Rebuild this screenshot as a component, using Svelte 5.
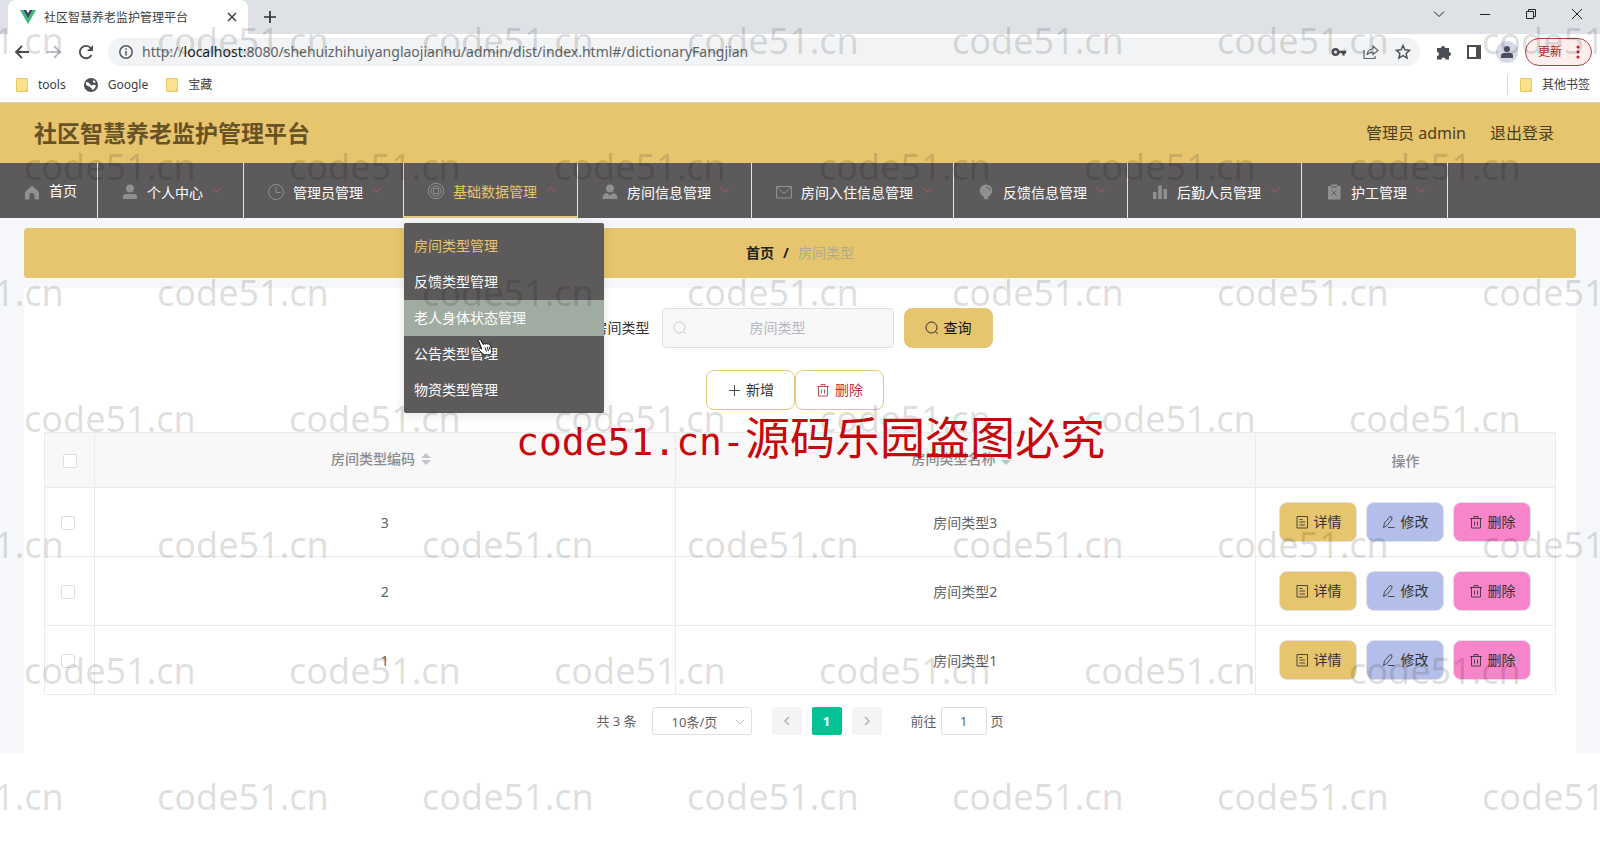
<!-- App.svelte -->
<script lang="ts">
	type NavItem = { label: string; icon: string; open?: boolean; children?: string[] };

	const navItems: NavItem[] = [
		{ label: '个人中心', icon: 'user' },
		{ label: '管理员管理', icon: 'clock' },
		{
			label: '基础数据管理',
			icon: 'ring',
			open: true,
			children: ['房间类型管理', '反馈类型管理', '老人身体状态管理', '公告类型管理', '物资类型管理']
		},
		{ label: '房间信息管理', icon: 'person' },
		{ label: '房间入住信息管理', icon: 'mail' },
		{ label: '反馈信息管理', icon: 'balloon' },
		{ label: '后勤人员管理', icon: 'bars' },
		{ label: '护工管理', icon: 'clipboard' }
	];

	const rows = [
		{ code: 3, name: '房间类型3' },
		{ code: 2, name: '房间类型2' },
		{ code: 1, name: '房间类型1' }
	];

	const watermarkRows = [0, 1, 2, 3, 4, 5, 6];
	const watermarkCols = [0, 1, 2, 3, 4, 5, 6];

	let keyword = $state('');
	let pageSize = $state('10');
	let jumpTo = $state('1');
	let checked = $state([false, false, false]);
	let allChecked = $derived(checked.every((c) => c));

	function toggleAll() {
		const next = !allChecked;
		checked = checked.map(() => next);
	}
</script>

{#snippet navIcon(name: string)}
	<svg class="nav-icon" viewBox="0 0 18 18" width="18" height="18" fill="#918f8f" stroke="none">
		{#if name === 'home'}
			<path d="M9 2.500 2 9v7.500h4.500v-4a2.500 2.500 0 0 1 5 0v4H16V9z" />
		{:else if name === 'user'}
			<circle cx="9" cy="5.500" r="4" />
			<path d="M2 16v-2.500Q2 11 5 11h8q3 0 3 2.500V16z" />
		{:else if name === 'clock'}
			<g fill="none" stroke="#918f8f"><circle cx="9" cy="9" r="7.500" /><path d="M9 4v5.500h4.500" /></g>
		{:else if name === 'ring'}
			<g fill="none" stroke="#918f8f">
				<circle cx="9" cy="9" r="7.700" />
				<circle cx="9" cy="9" r="5" />
				<path d="M6.500 6.500h5v5h-5z" />
			</g>
		{:else if name === 'person'}
			<circle cx="9" cy="5.500" r="4" />
			<path d="M1.500 16q0-5.500 4.500-6l3 2.500L12 10q4.500.5 4.500 6z" />
		{:else if name === 'mail'}
			<g fill="none" stroke="#918f8f"><path d="M1.500 3.500h15v11.500h-15zM2 4q5 6 7 6t7-6" /></g>
		{:else if name === 'balloon'}
			<path d="M9 1.500a6.300 6.300 0 0 1 6.300 6.300c0 3-2.300 5-4.700 6.600l1 1.800H6.400l1-1.800C5 12.800 2.700 10.800 2.700 7.800A6.300 6.300 0 0 1 9 1.500z" />
			<path d="M9.500 4q3.200.4 3.300 3.500" fill="none" stroke="#5c5a5a" />
		{:else if name === 'bars'}
			<path d="M2 9h3.500v7H2zM7.200 2.500h3.600V16H7.200zM12.500 6H16v10h-3.500z" />
		{:else if name === 'clipboard'}
			<path d="M3 3h3V1.500h6V3h3.500v13.500H3z" />
			<path d="M6 4h6M6.500 7.500l5 5M11.500 7.500l-5 5" fill="none" stroke="#5c5a5a" />
		{/if}
	</svg>
{/snippet}

{#snippet btnIcon(name: string)}
	<svg viewBox="0 0 14 14" width="14" height="14" fill="none" stroke="currentColor" stroke-opacity="0.85">
		{#if name === 'search'}
			<circle cx="6.500" cy="6.500" r="5.500" /><path d="m10.500 10.500 2.300 2.500" />
		{:else if name === 'plus'}
			<path d="M7.500 2v11M2 7.500h11" />
		{:else if name === 'trash'}
			<path d="M1 3.500h12M5 3.500v-2h4v2M2.500 3.500V13h9V3.500M5.500 6.500v4M8.500 6.500v4" />
		{:else if name === 'doc'}
			<path d="M2 1.500h10.500v11.500H2zM4.500 4.500h3M4.500 7h5.500M4.500 10h5.500" />
		{:else if name === 'edit'}
			<path d="M8 1.500q2.500 0 2 2.500L5 10.500 1.500 12.500 2.500 8zM6 12.500h6.500" />
		{/if}
	</svg>
{/snippet}

{#snippet folder()}
	<svg viewBox="0 0 12 14" width="12" height="14">
		<path d="M.5.5h11v13H.5z" fill="#fbe28a" stroke="#e4c766" />
		<path d="m9 13.500 2.500-4v4z" fill="#e4c766" />
	</svg>
{/snippet}

<div class="page">
	<div class="browser">
		<div class="tab-strip">
			<div class="tab">
				<svg viewBox="0 0 16 14" width="16" height="14">
					<path d="M0 0h3.200L8 8.500 12.800 0H16L8 14z" fill="#41b883" />
					<path d="M3.200 0h3L8 3.200 9.800 0h3L8 8.500z" fill="#35495e" />
				</svg>
				<span class="tab-title">社区智慧养老监护管理平台</span>
				<button class="bare" aria-label="关闭标签页">
					<svg viewBox="0 0 10 10" width="10" height="10" stroke="#3c4043" stroke-width="1.500"><path d="m1 1 8 8M9 1 1 9" /></svg>
				</button>
			</div>
			<button class="bare new-tab" aria-label="新标签页">
				<svg viewBox="0 0 12 12" width="12" height="12" stroke="#2f3235" stroke-width="1.700"><path d="M6 0v12M0 6h12" /></svg>
			</button>
			<div class="window-buttons">
				<button class="bare" aria-label="标签搜索"><svg viewBox="0 0 12 12" width="12" height="12"><path d="m1 3.500 5 5 5-5" /></svg></button>
				<button class="bare" aria-label="最小化"><svg viewBox="0 0 12 12" width="12" height="12"><path d="M1 6.500h10" /></svg></button>
				<button class="bare" aria-label="还原"><svg viewBox="0 0 12 12" width="12" height="12"><path d="M1.500 3.500h7v7h-7zM3.500 3.500v-2h7v7h-2" /></svg></button>
				<button class="bare" aria-label="关闭"><svg viewBox="0 0 12 12" width="12" height="12"><path d="m1 1 10 10M11 1 1 11" /></svg></button>
			</div>
		</div>

		<div class="toolbar">
			<button class="bare" aria-label="后退">
				<svg viewBox="0 0 16 16" width="16" height="16" fill="none" stroke="#4b4e52" stroke-width="1.800"><path d="M15 8H2M8 2 2 8l6 6" /></svg>
			</button>
			<button class="bare" aria-label="前进">
				<svg viewBox="0 0 16 16" width="16" height="16" fill="none" stroke="#b9bbbe" stroke-width="1.800"><path d="M1 8h13M8 2l6 6-6 6" /></svg>
			</button>
			<button class="bare" aria-label="刷新">
				<svg viewBox="0 0 16 16" width="16" height="16" fill="none" stroke="#4b4e52" stroke-width="1.800"><path d="M13.500 11A6.200 6.200 0 1 1 12.800 4" /><path d="M15 1v6H9z" fill="#4b4e52" stroke="none" /></svg>
			</button>
			<div class="address">
				<svg viewBox="0 0 14 14" width="14" height="14" fill="none" stroke="#55585c" stroke-width="1.500"><circle cx="7" cy="7" r="6.200" /><path d="M7 6v4.500M7 3.300v1.500" /></svg>
				<span class="url">http://<b>localhost:</b>8080/shehuizhihuiyanglaojianhu/admin/dist/index.html#/dictionaryFangjian</span>
				<div class="address-icons">
					<svg viewBox="0 0 16 16" width="16" height="16" fill="none" stroke="#4b4e52" stroke-width="2.400"><circle cx="4.500" cy="8" r="2.700" /><path d="M7 8h8M12.500 8v3.500" /></svg>
					<svg viewBox="0 0 16 16" width="16" height="16" fill="none" stroke="#5f6368" stroke-width="1.200"><path d="M1 6v8.500h11V12M4 11q.5-6 6-6V2l5 4.500-5 4V8Q6 8 4 11z" /></svg>
					<svg viewBox="0 0 16 16" width="16" height="16" fill="none" stroke="#4b4e52" stroke-width="1.400"><path d="m8 1.500 1.900 4.300 4.700.5-3.500 3.100 1 4.600L8 11.600 3.900 14l1-4.600-3.500-3.100 4.700-.5z" /></svg>
				</div>
			</div>
			<div class="extensions">
				<svg viewBox="0 0 16 16" width="16" height="16" fill="#4b4e52"><path d="M1 4h4a2 2 0 1 1 4 0h4v4a2 2 0 1 1 0 4v3.500H9.500a2 2 0 0 0-4 0H1V12a2 2 0 0 0 0-4z" /></svg>
				<svg viewBox="0 0 16 16" width="16" height="16" fill="none" stroke="#4b4e52" stroke-width="2"><path d="M2 2h12v12H2z" /><path d="M11 2h3v12h-3z" fill="#4b4e52" /></svg>
				<span class="avatar">
					<svg viewBox="0 0 14 14" width="14" height="14" fill="#4b4e5c"><circle cx="7" cy="4" r="3" /><path d="M1 13v-2q0-3 3-3h6q3 0 3 3v2z" /></svg>
				</span>
			</div>
			<button class="update">
				更新
				<svg viewBox="0 0 4 14" width="4" height="14" fill="#b3261e"><circle cx="2" cy="2" r="1.500" /><circle cx="2" cy="7" r="1.500" /><circle cx="2" cy="12" r="1.500" /></svg>
			</button>
		</div>

		<div class="bookmarks">
			<a href="#tools">{@render folder()}<span>tools</span></a>
			<a href="#google">
				<svg viewBox="0 0 14 14" width="14" height="14"><circle cx="7" cy="7" r="7" fill="#4b4e52" /><path d="M2 4q3 0 4 2t3 1q2-1 3 1-1 3-4 4 0-2-2-3T2 7zM8 1q2 1 1 2t1 2l2-1z" fill="#fff" /></svg>
				<span>Google</span>
			</a>
			<a href="#baozang">{@render folder()}<span>宝藏</span></a>
			<a class="other" href="#other">{@render folder()}<span>其他书签</span></a>
		</div>
	</div>

	<header class="header">
		<h1>社区智慧养老监护管理平台</h1>
		<span>管理员 admin</span>
		<a href="#logout">退出登录</a>
	</header>

	<nav class="nav">
		<div class="nav-item">
			<a href="#home">{@render navIcon('home')}首页</a>
		</div>
		{#each navItems as item}
			<div class="nav-item sub" class:open={item.open}>
				<a href="#menu">
					{@render navIcon(item.icon)}
					<span>{item.label}</span>
					<svg class="arrow" viewBox="0 0 12 12" width="12" height="12" fill="none" stroke="#b8505f">
						<path d={item.open ? 'm1.500 7.500 4.500-4 4.500 4' : 'm1.500 3 4.500 4 4.500-4'} />
					</svg>
				</a>
				{#if item.children}
					<ul class="dropdown">
						{#each item.children as child, i}
							<li class:active={i === 0} class:hover={i === 2}><a href="#sub">{child}</a></li>
						{/each}
					</ul>
					<svg class="pointer" viewBox="0 0 16 18" width="16" height="18" fill="#fff" stroke="#111">
						<path d="M1.300 2.300Q1.800.4 3.600 1.800L6.200 6.500q.8-1.300 2.200-.4.900-1 2.300 0 1.500-.7 2.200.6l1.600 3.500q.9 3.500-.8 6.600H7.200L3 13.200Q.8 11.500 1.800 10.500q1.300-.8 3 .7z" />
						<path d="m8 9.500 1.500 4M10.200 9l1.300 4M12.200 8.800l1 3" fill="none" />
					</svg>
				{/if}
			</div>
		{/each}
	</nav>

	<main class="main">
		<div class="breadcrumb">
			<a href="#home">首页</a><span class="slash">/</span><span class="current">房间类型</span>
		</div>

		<section class="card">
			<form class="search" onsubmit={(e) => e.preventDefault()}>
				<label for="keyword">房间类型</label>
				<div class="search-box">
					{@render btnIcon('search')}
					<input id="keyword" type="text" placeholder="房间类型" bind:value={keyword} />
				</div>
				<button class="btn query">{@render btnIcon('search')}查询</button>
			</form>

			<div class="actions">
				<button class="btn">{@render btnIcon('plus')}新增</button>
				<button class="btn danger">{@render btnIcon('trash')}删除</button>
			</div>

			<table>
				<colgroup><col class="col-check" /><col /><col /><col class="col-ops" /></colgroup>
				<thead>
					<tr>
						<th><input type="checkbox" aria-label="全选" checked={allChecked} onchange={toggleAll} /></th>
						{#each ['房间类型编码', '房间类型名称'] as title}
							<th class="sortable">
								{title}
								<svg viewBox="0 0 10 14" width="10" height="14" fill="#c0c4cc"><path d="m0 6 5-5 5 5zM0 8h10l-5 5z" /></svg>
							</th>
						{/each}
						<th>操作</th>
					</tr>
				</thead>
				<tbody>
					{#each rows as row, i}
						<tr>
							<td class="check"><input type="checkbox" aria-label={row.name} bind:checked={checked[i]} /></td>
							<td>{row.code}</td>
							<td>{row.name}</td>
							<td>
								<div class="ops">
									<button class="btn detail">{@render btnIcon('doc')}详情</button>
									<button class="btn edit">{@render btnIcon('edit')}修改</button>
									<button class="btn remove">{@render btnIcon('trash')}删除</button>
								</div>
							</td>
						</tr>
					{/each}
				</tbody>
			</table>

			<div class="pagination">
				<span>共 3 条</span>
				<div class="size">
					<select aria-label="每页条数" bind:value={pageSize}>
						<option value="10">10条/页</option>
						<option value="20">20条/页</option>
					</select>
					<svg viewBox="0 0 10 10" width="10" height="10" fill="none" stroke="#c0c4cc"><path d="m1 3 4 4 4-4" /></svg>
				</div>
				<div class="pager">
					<button aria-label="上一页"><svg viewBox="0 0 10 10" width="10" height="10"><path d="M7 1 3 5l4 4" /></svg></button>
					<button class="on">1</button>
					<button aria-label="下一页"><svg viewBox="0 0 10 10" width="10" height="10"><path d="m3 1 4 4-4 4" /></svg></button>
				</div>
				<label class="jump">前往<input type="text" bind:value={jumpTo} />页</label>
			</div>
		</section>
	</main>

	<div class="watermarks" aria-hidden="true">
		{#each watermarkRows as r}
			<div class="watermark-row" class:shifted={r % 2 === 0}>
				{#each watermarkCols as c (c)}<span>code51.cn</span>{/each}
			</div>
		{/each}
	</div>
	<p class="notice"><span>code51.cn-</span>源码乐园盗图必究</p>
</div>

<style>
	:global(body) {
		margin: 0;
		background: #fff;
	}
	.page {
		position: relative;
		min-height: 100vh;
		overflow: hidden;
		font-family: 'Noto Sans', 'Noto Sans CJK SC', sans-serif;
		font-size: 14px;
		line-height: 20px;
		color: #606266;
	}
	.page * {
		box-sizing: border-box;
	}
	a {
		color: inherit;
		text-decoration: none;
	}
	button,
	input,
	select {
		font: inherit;
		color: inherit;
	}
	svg {
		display: block;
		flex: none;
	}
	.bare {
		display: flex;
		padding: 0;
		border: none;
		background: none;
	}

	/* browser window */
	.browser {
		background: #fff;
		border-bottom: 1px solid #d8d4c8;
		font-size: 12px;
		color: #3c4043;
	}
	.tab-strip {
		display: flex;
		height: 34px;
		padding-left: 8px;
		background: #dee1e6;
	}
	.tab {
		display: flex;
		align-items: center;
		gap: 8px;
		width: 240px;
		padding: 0 11px 0 12px;
		border-radius: 8px 8px 0 0;
		background: #fff;
	}
	.tab-title {
		flex: 1;
		padding-top: 2px;
	}
	.new-tab {
		align-items: center;
		margin-left: 16px;
	}
	.window-buttons {
		display: flex;
		gap: 34px;
		height: 28px;
		align-items: center;
		margin-left: auto;
		padding-right: 17px;
	}
	.window-buttons svg {
		fill: none;
		stroke: #222;
	}
	.toolbar {
		display: flex;
		align-items: center;
		height: 36px;
		padding: 0 8px 0 14px;
		gap: 16px;
	}
	.address {
		display: flex;
		flex: 1;
		align-items: center;
		gap: 9px;
		height: 28px;
		margin-left: -2px;
		padding: 0 9px 0 11px;
		border-radius: 14px;
		background: #f1f3f4;
	}
	.url {
		flex: 1;
		font-size: 14px;
		color: #5f6368;
		white-space: nowrap;
	}
	.url b {
		font-weight: 400;
		color: #202124;
	}
	.address-icons,
	.extensions {
		display: flex;
		align-items: center;
		gap: 16px;
	}
	.extensions {
		gap: 14px;
	}
	.avatar {
		display: flex;
		align-items: center;
		justify-content: center;
		width: 22px;
		height: 22px;
		border-radius: 50%;
		background: #d5dae6;
	}
	.update {
		display: flex;
		align-items: center;
		justify-content: space-between;
		width: 67px;
		height: 28px;
		margin-left: -9px;
		padding: 0 11px 0 12px;
		border: 1px solid #b3413f;
		border-radius: 14px;
		background: #fceeee;
		color: #b3261e;
	}
	.bookmarks {
		display: flex;
		align-items: center;
		gap: 18px;
		height: 32px;
		padding: 0 10px 2px 16px;
	}
	.bookmarks a {
		display: flex;
		align-items: center;
		gap: 10px;
	}
	.bookmarks .other {
		margin-left: auto;
		padding-left: 12px;
		border-left: 1px solid #d5d7da;
	}

	/* site header and menu */
	.header {
		display: flex;
		align-items: center;
		gap: 24px;
		height: 60px;
		padding: 0 46px 0 34px;
		background: #e6c56e;
		font-size: 16px;
		color: #4d4020;
	}
	.header h1 {
		flex: 1;
		margin: 0;
		font-size: 23px;
		line-height: 32px;
		font-weight: 700;
		color: #695225;
	}
	.nav {
		display: flex;
		height: 55px;
		background: #5c5a5a;
		color: #fff;
	}
	.nav-item {
		position: relative;
		border-right: 1px solid #e3e3e3;
	}
	.nav-item > a {
		display: flex;
		align-items: center;
		height: 55px;
		padding: 0 20px;
		white-space: nowrap;
	}
	.nav-icon {
		margin: 2px 8px 0 3px;
	}
	.sub span {
		padding-top: 4px;
	}
	.arrow {
		margin-left: 8px;
	}
	.sub.open > a {
		border-bottom: 2px solid #e6c88a;
		color: #e6c56e;
	}
	.dropdown {
		position: absolute;
		top: 60px;
		left: 0;
		z-index: 2;
		width: 200px;
		margin: 0;
		padding: 5px 0;
		list-style: none;
		border-radius: 2px;
		background: #5c5a5a;
		box-shadow: 0 2px 12px rgba(0, 0, 0, 0.1);
	}
	.dropdown a {
		display: block;
		padding: 0 10px;
		line-height: 36px;
	}
	.dropdown .active {
		color: #e6c56e;
	}
	.dropdown .hover {
		background: #a0aba2;
	}
	.pointer {
		position: absolute;
		top: 175px;
		left: 73px;
		z-index: 3;
	}

	/* content */
	.main {
		padding: 10px 24px 0;
		background: #f6f7fa;
	}
	.breadcrumb {
		display: flex;
		align-items: center;
		justify-content: center;
		height: 50px;
		margin-bottom: 10px;
		border-radius: 4px;
		background: #e6c56e;
		font-weight: 700;
		color: #222;
	}
	.slash {
		margin: 0 9px;
	}
	.current {
		font-weight: 400;
		color: #a9ad92;
	}
	.card {
		padding: 20px 20px 18px;
		background: #fff;
	}
	.search {
		display: flex;
		align-items: center;
		justify-content: center;
		padding-right: 14px;
	}
	.search label {
		margin-right: 12px;
		color: #333;
	}
	.search-box {
		display: flex;
		align-items: center;
		width: 232px;
		height: 40px;
		margin-right: 10px;
		padding: 0 10px;
		border: 1px solid #dcdfe6;
		border-radius: 4px;
		background: #f8f8f8;
		color: #c0c4cc;
	}
	.search-box input {
		width: 100%;
		padding: 0 14px 0 0;
		border: none;
		outline: none;
		background: none;
		text-align: center;
	}
	.search-box input::placeholder {
		color: #b4b7bd;
	}
	.btn {
		display: flex;
		align-items: center;
		justify-content: center;
		gap: 5px;
		width: 89px;
		height: 40px;
		padding: 0;
		border: 1px solid #e2c878;
		border-radius: 8px;
		background: #fff;
		color: #333;
	}
	.btn.query {
		background: #e6c56e;
		color: #111;
	}
	.actions {
		display: flex;
		justify-content: center;
		margin: 22px 0;
		padding-right: 10px;
	}
	.btn.danger {
		color: #c22f3c;
	}
	table {
		width: 100%;
		table-layout: fixed;
		border-collapse: collapse;
	}
	.col-check {
		width: 50px;
	}
	.col-ops {
		width: 300px;
	}
	th,
	td {
		padding: 2px 0 0;
		border: 1px solid #ebebeb;
		text-align: center;
	}
	th {
		height: 55px;
		background: #f8f8f8;
		font-weight: 500;
		color: #8a8c90;
	}
	.sortable {
		padding: 0 8px 2px 0;
	}
	.sortable svg {
		display: inline-block;
		vertical-align: -2px;
		margin-left: 2px;
	}
	td {
		height: 69px;
	}
	td:last-child {
		padding: 0 1px 0 0;
	}
	.check {
		padding-right: 4px;
	}
	input[type='checkbox'] {
		display: block;
		width: 14px;
		height: 14px;
		margin: 0 auto;
		appearance: none;
		border: 1px solid #dcdfe6;
		border-radius: 2px;
		background: #fff;
	}
	input[type='checkbox']:checked {
		background: #00c292;
	}
	.ops {
		display: flex;
		justify-content: center;
		gap: 9px;
	}
	.ops .btn {
		width: 78px;
		border-color: #e0e0e8;
	}
	.ops .detail {
		background: #e6c56e;
	}
	.ops .edit {
		background: #b3bfe9;
	}
	.ops .remove {
		background: #f884c9;
	}

	.pagination {
		display: flex;
		align-items: center;
		justify-content: center;
		margin-top: 12px;
		font-size: 13px;
		line-height: 28px;
	}
	.size {
		position: relative;
		margin: 0 20px 0 15px;
	}
	.size select {
		display: block;
		width: 100px;
		height: 28px;
		padding: 0 19px;
		appearance: none;
		border: 1px solid #dcdfe6;
		border-radius: 3px;
		background: #fff;
	}
	.size svg {
		position: absolute;
		top: 10px;
		right: 7px;
	}
	.pager {
		display: flex;
		gap: 10px;
	}
	.pager button {
		display: flex;
		align-items: center;
		justify-content: center;
		width: 30px;
		height: 28px;
		padding: 0;
		border: none;
		border-radius: 2px;
		background: #f4f4f5;
		font-weight: 700;
	}
	.pager svg {
		fill: none;
		stroke: #b0b3b9;
		stroke-width: 1.5;
	}
	.pager .on {
		background: #00c292;
		color: #fff;
	}
	.jump {
		display: flex;
		align-items: center;
		margin-left: 29px;
	}
	.jump input {
		width: 46px;
		height: 28px;
		margin: 0 4px;
		padding: 0;
		border: 1px solid #dcdfe6;
		border-radius: 3px;
		text-align: center;
	}

	/* watermark layer */
	.watermarks {
		position: absolute;
		inset: 0;
		z-index: 5;
		margin-top: -22px;
		overflow: hidden;
		pointer-events: none;
		font-size: 36px;
		line-height: 126px;
		color: rgba(0, 0, 0, 0.14);
	}
	.watermark-row {
		display: flex;
		margin-left: 24px;
	}
	.watermark-row.shifted {
		margin-left: -108px;
	}
	.watermark-row span {
		flex: none;
		width: 265px;
	}
	.notice {
		position: absolute;
		top: 408px;
		left: 0;
		right: 0;
		z-index: 6;
		margin: 0;
		padding-left: 21px;
		pointer-events: none;
		text-align: center;
		font-size: 45px;
		line-height: 60px;
		color: #c8070c;
		white-space: nowrap;
	}
	.notice span {
		font-family: 'DejaVu Sans Mono', monospace;
		font-size: 38px;
	}
</style>
